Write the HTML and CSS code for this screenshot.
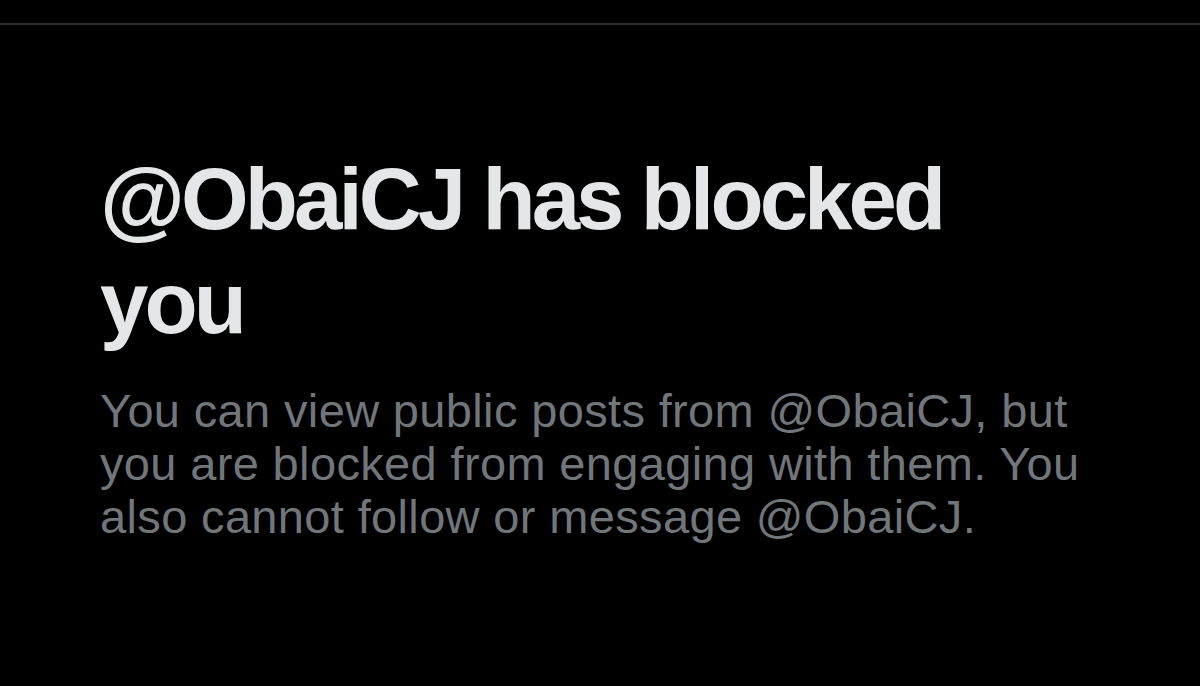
FILE: index.html
```html
<!DOCTYPE html>
<html lang="en">
<head>
<meta charset="utf-8">
<title>Blocked</title>
<link rel="stylesheet" href="styles.css">
</head>
<body>
<div class="topbar"></div>
<main class="notice">
  <h1 class="notice-title">@ObaiCJ has blocked you</h1>
  <p class="notice-text">You can view public posts from @ObaiCJ, but you are blocked from engaging with them. You also cannot follow or message @ObaiCJ.</p>
</main>
</body>
</html>
```
FILE: styles.css
```css
html, body {
  margin: 0;
  padding: 0;
  background: #000;
  height: 100%;
  overflow: hidden;
}
body {
  font-family: "Liberation Sans", Arial, sans-serif;
}
.topbar {
  height: 23px;
  border-bottom: 2px solid #2a2d30;
}
.notice {
  padding: 122px 100px 0 100px;
  max-width: 1000px;
}
.notice-title {
  margin: 0;
  font-size: 87px;
  line-height: 104px;
  font-weight: 700;
  letter-spacing: -3.9px;
  color: #e4e6e7;
}
.notice-text {
  margin: 29px 0 0 0;
  font-size: 47px;
  line-height: 53px;
  font-weight: 400;
  letter-spacing: 0.35px;
  color: #71767b;
}
```
